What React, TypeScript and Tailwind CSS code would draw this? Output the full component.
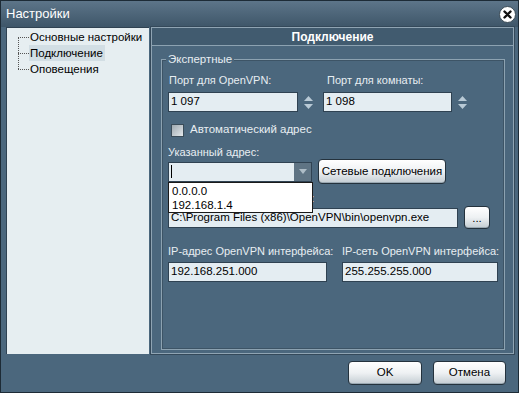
import React from 'react';

const font = { fontFamily: '"Liberation Sans", Arial, sans-serif' };

function Spinner() {
  return (
    <div className="flex flex-col items-center justify-center gap-[3px] w-[20px]">
      <svg width="9" height="5" viewBox="0 0 9 5"><path d="M0 5 L4.5 0 L9 5 Z" fill="#b9cad6" /></svg>
      <svg width="9" height="5" viewBox="0 0 9 5"><path d="M0 0 L4.5 5 L9 0 Z" fill="#b9cad6" /></svg>
    </div>
  );
}

function Field({ value, className }: { value: string; className: string }) {
  return (
    <div
      className={`h-[20px] bg-[#e4edf2] border border-[#2f4252] flex items-center pl-[2px] text-[11.5px] text-black leading-none whitespace-nowrap overflow-hidden ${className}`}
    >
      {value}
    </div>
  );
}

function Btn({ children, className }: { children: React.ReactNode; className: string }) {
  return (
    <div
      className={`rounded-[4px] border border-[#24323d] bg-gradient-to-b from-[#ffffff] via-[#eef1f3] to-[#c3ccd2] flex items-center justify-center text-[11.5px] text-black whitespace-nowrap shadow-[inset_0_-1px_0_#9aa8b2] shrink-0 ${className}`}
    >
      {children}
    </div>
  );
}

export default function App() {
  return (
    <div
      style={font}
      className="w-[519px] h-[393px] bg-[#4b677d] border border-[#1d2b36] flex flex-col overflow-hidden whitespace-nowrap"
    >
      {/* Title bar */}
      <div className="h-[26px] flex items-center justify-between pl-[5px] pr-[2px] bg-gradient-to-b from-[#5d7589] to-[#3e5669]">
        <span className="text-[13px] text-white">Настройки</span>
        <div className="w-[17px] h-[17px] rounded-full bg-white border border-[#3a4a55] flex items-center justify-center">
          <svg width="9" height="9" viewBox="0 0 9 9">
            <path d="M1.5 1.5 L7.5 7.5 M7.5 1.5 L1.5 7.5" stroke="#111" strokeWidth="2.4" strokeLinecap="round" />
          </svg>
        </div>
      </div>

      {/* Body */}
      <div className="flex h-[327px] pl-[5px] pr-[4px] gap-[2px]">
        {/* Tree */}
        <div className="w-[143px] shrink-0 bg-[#e6eef1] border-l border-t border-[#2f4252] pt-[1px] text-[11.5px] text-black relative">
          <div className="absolute left-[11px] top-[9px] h-[32px] border-l border-dotted border-[#555]" />
          {['Основные настройки', 'Подключение', 'Оповещения'].map((t, i) => (
            <div key={t} className="flex items-center h-[16px]">
              <span className="ml-[11px] w-[11px] border-t border-dotted border-[#555]" />
              <span className={`pl-[1px] pr-[2px] leading-[16px] ${i === 1 ? 'bg-[#d2dee4]' : ''}`}>{t}</span>
            </div>
          ))}
        </div>

        {/* Right panel */}
        <div className="flex-1 min-w-0 flex flex-col border border-[#8fa4b3] shadow-[0_0_0_1px_#34495a]">
          <div className="h-[18px] bg-[#415b6f] border-b border-[#8ca2b1] flex items-center justify-center text-[12px] font-bold text-white">
            Подключение
          </div>
          <div className="flex-1 pt-[13px] pl-[9px] pr-[8px] pb-[3px]">
            <div className="h-full border border-[#8ca2b1] shadow-[inset_0_0_0_1px_#3d5466] relative pl-[6px] pt-[13px] text-[11px]">
              <span className="absolute -top-[8px] left-[4px] px-[2px] bg-[#4b677d] text-[#e8eef2] leading-[14px] text-[11.5px]">
                Экспертные
              </span>

              {/* Ports */}
              <div className="flex text-[#e8eef2]">
                <div className="w-[155px] flex flex-col">
                  <span className="leading-[14px] pl-[1px]">Порт для OpenVPN:</span>
                  <div className="flex mt-[5px]">
                    <Field value="1 097" className="w-[130px]" />
                    <Spinner />
                  </div>
                </div>
                <div className="flex flex-col">
                  <span className="leading-[14px] pl-[4px]">Порт для комнаты:</span>
                  <div className="flex mt-[5px]">
                    <Field value="1 098" className="w-[129px]" />
                    <Spinner />
                  </div>
                </div>
              </div>

              {/* Checkbox */}
              <div className="flex items-center mt-[11px] ml-[3px] h-[14px] gap-[6px]">
                <div className="w-[13px] h-[13px] border border-[#3a4c59] bg-gradient-to-br from-[#9fa9b0] to-[#e3e8eb]" />
                <span className="text-[#e8eef2] text-[11.5px]">Автоматический адрес</span>
              </div>

              {/* Address */}
              <div className="mt-[8px] text-[#e8eef2] leading-[14px]">Указанный адрес:</div>
              <div className="flex items-center h-[25px] gap-[6px]">
                <div className="relative shrink-0">
                  <div className="w-[144px] h-[20px] flex border border-[#2f4252] bg-[#e4edf2]">
                    <div className="flex-1 flex items-center pl-[2px]">
                      <span className="w-[1px] h-[13px] bg-black" />
                    </div>
                    <div className="w-[17px] bg-[#5f7484] flex items-center justify-center">
                      <svg width="8" height="5" viewBox="0 0 8 5"><path d="M0 0 L4 5 L8 0 Z" fill="#aebdc7" /></svg>
                    </div>
                  </div>
                  <div className="absolute left-0 top-[20px] w-[145px] h-[31px] bg-white border border-[#1a1a1a] z-10 text-black text-[11.5px] pl-[3px] pt-[1px] leading-[14px]">
                    <div>0.0.0.0</div>
                    <div>192.168.1.4</div>
                  </div>
                </div>
                <Btn className="w-[128px] h-[25px]">Сетевые подключения</Btn>
              </div>

              {/* Path */}
              <div className="mt-[7px] text-[#e8eef2] leading-[14px]">Путь к программе OpenVPN:</div>
              <div className="flex items-center h-[23px] gap-[6px] mt-[1px]">
                <Field value="C:\Program Files (x86)\OpenVPN\bin\openvpn.exe" className="w-[290px]" />
                <Btn className="w-[26px] h-[23px] items-end pb-[4px] text-[10px] leading-none">...</Btn>
              </div>

              {/* IP */}
              <div className="flex mt-[15px] text-[#e8eef2]">
                <div className="w-[174px] flex flex-col">
                  <span className="leading-[14px]">IP-адрес OpenVPN интерфейса:</span>
                  <Field value="192.168.251.000" className="w-[159px] mt-[4px]" />
                </div>
                <div className="flex flex-col">
                  <span className="leading-[14px]">IP-сеть OpenVPN интерфейса:</span>
                  <Field value="255.255.255.000" className="w-[156px] mt-[4px]" />
                </div>
              </div>
            </div>
          </div>
        </div>
      </div>

      {/* Footer */}
      <div className="flex-1 flex justify-end items-start gap-[11px] pt-[7px] pr-[12px]">
        <Btn className="w-[74px] h-[24px]">OK</Btn>
        <Btn className="w-[73px] h-[24px]">Отмена</Btn>
      </div>
    </div>
  );
}
